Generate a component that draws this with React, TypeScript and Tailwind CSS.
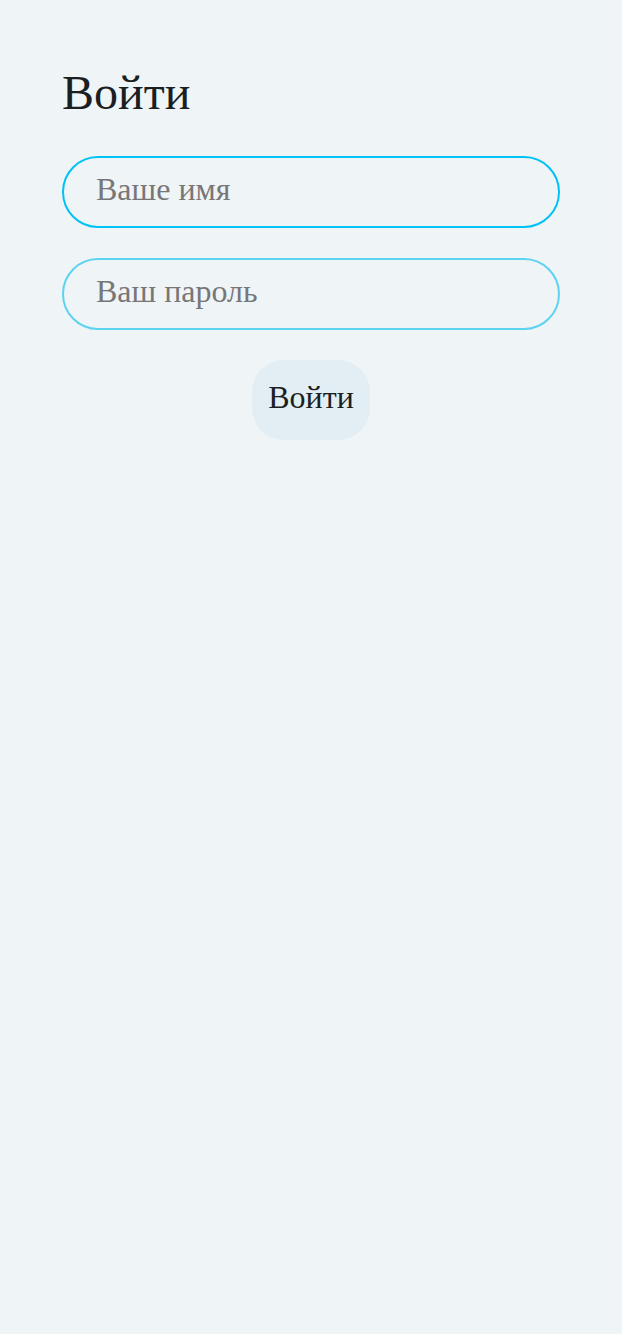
export default function App() {
  return (
    <div
      className="min-h-screen bg-[#eff4f7] px-[62px] pt-[62px] text-[#1b1f22]"
      style={{ fontFamily: '"Liberation Serif", serif' }}
    >
      <h1 className="text-[48px] leading-[62px] font-normal">Войти</h1>
      <form className="mt-[32px] flex flex-col items-center gap-[30px]">
        <input
          type="text"
          placeholder="Ваше имя"
          className="h-[72px] w-full rounded-full border-2 border-[#00c2f4] bg-transparent px-[32px] pb-[6px] text-[32px] text-[#1b1f22] outline-none placeholder:text-[#777]"
        />
        <input
          type="password"
          placeholder="Ваш пароль"
          className="h-[72px] w-full rounded-full border-2 border-[#5dd3f2] bg-transparent px-[32px] pb-[6px] text-[32px] text-[#1b1f22] outline-none placeholder:text-[#777]"
        />
        <button
          type="button"
          className="h-[80px] rounded-[32px] bg-[#e2eef3] px-[16px] pb-[6px] text-[32px] text-[#1b1f22]"
        >
          Войти
        </button>
      </form>
    </div>
  );
}
